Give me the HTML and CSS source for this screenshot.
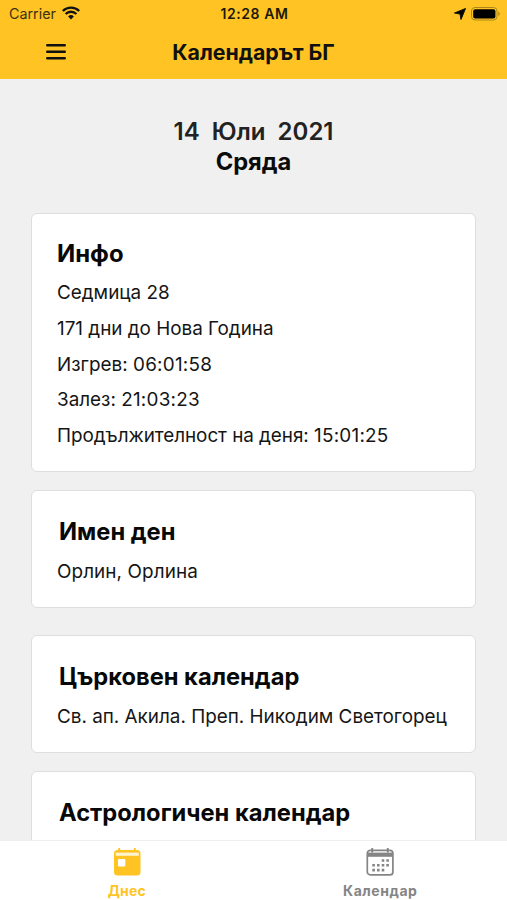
FILE: index.html
```html
<!DOCTYPE html>
<html lang="bg">
<head>
<meta charset="utf-8">
<title>Календарът БГ</title>
<link rel="stylesheet" href="styles.css">
</head>
<body>
<header class="top">
  <div class="status">
    <div class="carrier"><span>Carrier</span>
      <svg width="18" height="14" viewBox="0 0 18 14"><path d="M.8 5a11.600 11.600 0 0 1 16.400 0M3.600 8a7.600 7.600 0 0 1 10.800 0" fill="none" stroke="#111" stroke-width="2.300"/><path d="M9 13.600 6.100 10.500a4.200 4.200 0 0 1 5.800 0z" fill="#111"/></svg>
    </div>
    <span class="clock">12:28 AM</span>
    <div class="power">
      <svg width="12" height="12" viewBox="0 0 12 12"><path d="M11.500.5 7 11.500 6 6 .5 5z" stroke="#111" stroke-width="1" stroke-linejoin="round"/></svg>
      <svg width="30" height="14" viewBox="0 0 30 14"><rect x=".5" y=".5" width="25.500" height="12.500" rx="3.500" fill="none" stroke="#ad8619"/><rect x="2.200" y="2.200" width="22.200" height="9.200" rx="2"/><path d="M27.300 4.500q3 2.200 0 4.500z" fill="#ad8619"/></svg>
    </div>
  </div>
  <div class="nav">
    <svg class="menu" width="20" height="16" viewBox="0 0 20 16" role="img" aria-label="Меню"><path d="M1.200 1.300h17.600M1.200 7.800h17.600M1.200 14.300h17.600" stroke="#111" stroke-width="2.400" stroke-linecap="round"/></svg>
    <h1>Календарът БГ</h1>
    <div class="nav-end"></div>
  </div>
</header>
<main>
  <div class="date"><div class="full-date">14&nbsp; Юли&nbsp; 2021</div><div class="weekday">Сряда</div></div>
  <section class="card info">
    <h2>Инфо</h2>
    <p>Седмица 28</p>
    <p>171 дни до Нова Година</p>
    <p>Изгрев: <span class="time">06:01:58</span></p>
    <p>Залез: <span class="time">21:03:23</span></p>
    <p><span class="length">Продължителност на деня: </span><span class="time">15:01:25</span></p>
  </section>
  <section class="card short names">
    <h2>Имен ден</h2>
    <p class="name-list">Орлин, Орлина</p>
  </section>
  <section class="card short church">
    <h2>Църковен календар</h2>
    <p>Св. ап. Акила. Преп. Никодим Светогорец</p>
  </section>
  <section class="card short">
    <h2>Астрологичен календар</h2>
  </section>
</main>
<footer class="tabs">
  <div class="tab active">
    <svg width="28" height="28" viewBox="0 0 28 28"><rect x="1" y="2" width="26.500" height="25.500" rx="3.500" fill="currentColor"/><path d="M6.200.8v3M21.800.8v3" stroke="currentColor" stroke-width="2" stroke-linecap="round"/><path d="M2.700 4.600h23.100v3.200h-23.100z" fill="#fff3cf"/><rect x="5" y="11" width="7.300" height="7.500" rx="1" fill="#fff"/></svg>
    <span>Днес</span>
  </div>
  <div class="tab">
    <svg width="28" height="28" viewBox="0 0 28 28"><rect x="1.300" y="2.300" width="25.600" height="24.600" rx="3" fill="#fff" stroke="currentColor" stroke-width="1.700"/><path d="M1.500 4.600h25.200v4.200h-25.200z" fill="currentColor"/><path d="M6.200.8v3M21.800.8v3" stroke="currentColor" stroke-width="2" stroke-linecap="round"/><path d="M15.700 12.500h2.600M20.300 12.500h2.600M6.300 17.300h2.600M11 17.300h2.600M15.700 17.300h2.600M20.300 17.300h2.600M6.300 22.100h2.600M11 22.100h2.600M15.700 22.100h2.600" stroke="currentColor" stroke-width="2.600"/></svg>
    <span class="cal-label">Календар</span>
  </div>
</footer>
</body>
</html>
```
FILE: styles.css
```css
* { box-sizing: border-box; }
body { margin: 0; height: 900px; overflow: hidden; display: flex; flex-direction: column; background: #f0f0f0; font-family: Inter, sans-serif; color: #151515; }
h1, h2, p { margin: 0; white-space: nowrap; }
svg { display: block; flex: none; }
.top { height: 79px; background: #ffc423; flex: none; }
.status { height: 27px; display: grid; grid-template-columns: 1fr auto 1fr; align-items: center; padding: 0 7px 0 9px; font-size: 14.3px; }
.carrier { display: flex; align-items: center; gap: 6px; color: #3b3010; }
.carrier svg { margin-bottom: 2px; }
.clock { font-weight: 600; font-size: 14px; color: #1d1808; letter-spacing: .55px; }
.power { display: flex; justify-content: flex-end; align-items: center; gap: 5px; margin-right: -1px; }
.nav { height: 52px; display: grid; grid-template-columns: 1fr auto 1fr; align-items: center; padding-bottom: 2px; }
.menu { margin-left: 46px; }
h1 { font-size: 21.3px; line-height: 28px; font-weight: 700; color: #111; }
main { flex: 1; min-height: 0; overflow: hidden; padding: 38px 31px 0; }
.date { height: 96px; text-align: center; font-size: 24px; line-height: 30px; font-weight: 600; }
.full-date { color: #222; }
.weekday { font-weight: 700; color: #0b0b0b; font-size: 23.7px; }
.card { background: #fff; border: 1px solid #dedede; border-radius: 6px; padding: 25px; }
.info { height: 259px; margin-bottom: 18px; }
.info h2 { margin-bottom: 6px; }
.short { height: 118px; padding-top: 26px; }
.names { margin-bottom: 27px; }
.church { margin-bottom: 18px; }
h2 { font-size: 23.9px; line-height: 30px; font-weight: 700; color: #080808; }
.short h2 { margin: 0 0 8px 2px; font-size: 23.7px; }
p { font-size: 18.88px; line-height: 35.8px; }
.time { letter-spacing: .25px; }
.length { letter-spacing: -.04px; }
.short p { line-height: 34px; }
.name-list { letter-spacing: .1px; }
.tabs { height: 60px; background: #fff; border-top: 1px solid #eee; display: flex; flex: none; }
.tab { flex: 1; display: flex; flex-direction: column; align-items: center; padding-top: 7px; gap: 6px; color: #858585; font-size: 14px; line-height: 18px; font-weight: 700; }
.cal-label { letter-spacing: .55px; }
.active { color: #ffc423; }
.active span { letter-spacing: .2px; }
```
